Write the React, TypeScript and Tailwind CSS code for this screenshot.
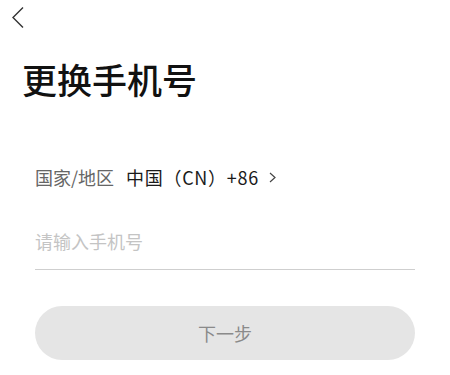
const CJK = '"Noto Sans CJK SC", "Noto Sans", sans-serif';

export default function App() {
  return (
    <div className="w-[450px] h-[375px] bg-white overflow-hidden" style={{ fontFamily: CJK }}>
      {/* Back */}
      <div className="h-[34px] pl-[12px] pt-[7px]">
        <svg width="12" height="21" viewBox="0 0 12 21" fill="none">
          <path d="M11 0.5 L1 10.5 L11 20.5" stroke="#333" strokeWidth="1.4" />
        </svg>
      </div>

      <h1 className="pl-[22px] mt-[20px] text-[35px] leading-[50px] font-medium text-[#111]">更换手机号</h1>

      <div className="px-[35px]">
        <div className="mt-[61px] flex items-center text-[18px] leading-[24px]">
          <span className="text-[#666]">国家/地区</span>
          <span className="ml-[12px] text-[#1a1a1a] tracking-[0.7px]">中国（CN）+86</span>
          <svg className="ml-[10px]" width="7" height="11" viewBox="0 0 7 11" fill="none">
            <path d="M1 1 L6 5.5 L1 10" stroke="#444" strokeWidth="1.2" />
          </svg>
        </div>

        <div className="mt-[37px] h-[44px] border-b border-[#cfcfcf] flex items-start">
          <span className="text-[18px] leading-[30px] text-[#c4c4c4]">请输入手机号</span>
        </div>

        <button className="mt-[36px] w-full h-[54px] rounded-full bg-[#e5e5e5] text-[18px] text-[#8a8a8a]">
          下一步
        </button>
      </div>
    </div>
  );
}
